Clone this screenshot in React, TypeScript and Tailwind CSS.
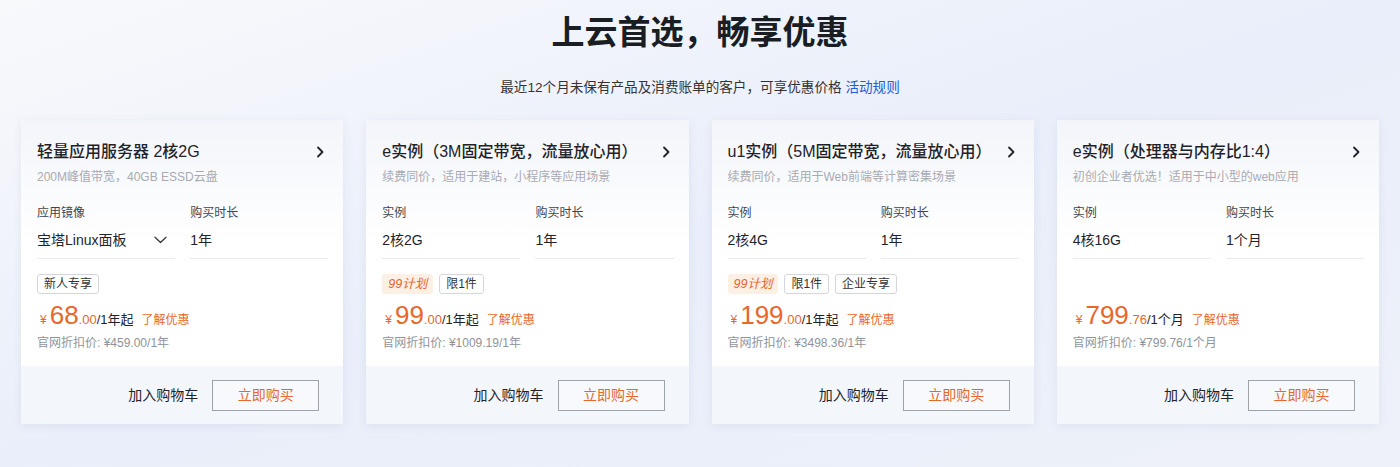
import React from "react";

type Tag = { text: string; kind: "plan" | "plain" };

type Product = {
  title: string;
  desc: string;
  leftLabel: string;
  leftValue: string;
  dropdown?: boolean;
  duration: string;
  tags: Tag[];
  price: string;
  cents: string;
  unit: string;
  original: string;
};

const products: Product[] = [
  {
    title: "轻量应用服务器 2核2G",
    desc: "200M峰值带宽，40GB ESSD云盘",
    leftLabel: "应用镜像",
    leftValue: "宝塔Linux面板",
    dropdown: true,
    duration: "1年",
    tags: [{ text: "新人专享", kind: "plain" }],
    price: "68",
    cents: ".00",
    unit: "/1年起",
    original: "官网折扣价: ¥459.00/1年",
  },
  {
    title: "e实例（3M固定带宽，流量放心用）",
    desc: "续费同价，适用于建站，小程序等应用场景",
    leftLabel: "实例",
    leftValue: "2核2G",
    duration: "1年",
    tags: [
      { text: "99计划", kind: "plan" },
      { text: "限1件", kind: "plain" },
    ],
    price: "99",
    cents: ".00",
    unit: "/1年起",
    original: "官网折扣价: ¥1009.19/1年",
  },
  {
    title: "u1实例（5M固定带宽，流量放心用）",
    desc: "续费同价，适用于Web前端等计算密集场景",
    leftLabel: "实例",
    leftValue: "2核4G",
    duration: "1年",
    tags: [
      { text: "99计划", kind: "plan" },
      { text: "限1件", kind: "plain" },
      { text: "企业专享", kind: "plain" },
    ],
    price: "199",
    cents: ".00",
    unit: "/1年起",
    original: "官网折扣价: ¥3498.36/1年",
  },
  {
    title: "e实例（处理器与内存比1:4）",
    desc: "初创企业者优选！适用于中小型的web应用",
    leftLabel: "实例",
    leftValue: "4核16G",
    duration: "1个月",
    tags: [],
    price: "799",
    cents: ".76",
    unit: "/1个月",
    original: "官网折扣价: ¥799.76/1个月",
  },
];

const ChevronRight = () => (
  <svg width="10" height="12" viewBox="0 0 10 12" fill="none">
    <path d="M3 1.5 L7.5 6 L3 10.5" stroke="#1f2329" strokeWidth="1.8" strokeLinecap="round" strokeLinejoin="round" />
  </svg>
);

const ChevronDown = () => (
  <svg width="13" height="8" viewBox="0 0 13 8" fill="none">
    <path d="M1 1.2 L6.5 6.5 L12 1.2" stroke="#333" strokeWidth="1.2" strokeLinecap="round" strokeLinejoin="round" />
  </svg>
);

function Card({ p }: { p: Product }) {
  return (
    <div className="flex h-[304px] flex-col overflow-hidden rounded-[2px] bg-white shadow-[0_2px_10px_rgba(60,80,120,0.08)]">
      <div className="flex-1 bg-gradient-to-b from-[#f3f5fa] via-white to-white to-[35%] pl-4 pr-[15px] pt-5">
        <div className="flex h-6 items-center justify-between">
          <span className="text-[16px] font-medium leading-6 text-[#1f2329]">{p.title}</span>
          <span className="mr-[3px]">
            <ChevronRight />
          </span>
        </div>
        <div className="mt-1 text-[12px] leading-[18px] text-[#a8abb2]">{p.desc}</div>

        <div className="mt-[17px] grid grid-cols-2 gap-[15px]">
          <div className="border-b border-[#e9ebef] pb-[7px]">
            <div className="text-[12px] leading-5 text-[#41454c]">{p.leftLabel}</div>
            <div className="mt-[6px] flex h-[22px] items-center justify-between pr-2">
              <span className="text-[14px] leading-[22px] text-[#1f2329]">{p.leftValue}</span>
              {p.dropdown && <ChevronDown />}
            </div>
          </div>
          <div className="border-b border-[#e9ebef] pb-[7px]">
            <div className="text-[12px] leading-5 text-[#41454c]">购买时长</div>
            <div className="mt-[6px] h-[22px] text-[14px] leading-[22px] text-[#1f2329]">{p.duration}</div>
          </div>
        </div>

        <div className="mt-[15px] flex h-5 gap-[6px]">
          {p.tags.map((t) =>
            t.kind === "plan" ? (
              <span
                key={t.text}
                className="flex h-5 items-center rounded-[3px] bg-[#fcefe4] px-[6px] text-[12.5px] italic text-[#e5642c]"
              >
                {t.text}
              </span>
            ) : (
              <span
                key={t.text}
                className="flex h-5 items-center rounded-[3px] border border-[#d3d6dc] bg-white px-[6px] text-[12px] text-[#333]"
              >
                {t.text}
              </span>
            )
          )}
        </div>

        <div className="mt-[6px] flex h-[30px] items-baseline pl-[3px]">
          <span className="mr-[3px] text-[12px] text-[#e8672a]">¥</span>
          <span className="text-[26px] font-medium leading-[30px] text-[#e8672a]">{p.price}</span>
          <span className="text-[13px] text-[#e8672a]">{p.cents}</span>
          <span className="text-[13px] text-[#1f2329]">{p.unit}</span>
          <span className="ml-[8px] text-[12px] text-[#e8672a]">了解优惠</span>
        </div>
        <div className="mt-[4px] text-[12px] leading-[18px] text-[#8f939a]">{p.original}</div>
      </div>

      <div className="flex h-[58px] items-center justify-end gap-[14px] bg-[#f3f6fb] pr-6">
        <span className="text-[14px] text-[#1f2329]">加入购物车</span>
        <button className="h-[31px] w-[107px] border border-[#9ea3ab] bg-[#f7f9fc] text-[14px] text-[#e8672a]">
          立即购买
        </button>
      </div>
    </div>
  );
}

export default function App() {
  return (
    <div
      className="h-[467px] w-[1400px] bg-gradient-to-br from-[#f8f9fb] via-[#e9eefa] to-[#eef1f9] pt-[11px]"
      style={{ fontFamily: '"Liberation Sans", "Noto Sans CJK SC", sans-serif' }}
    >
      <h1 className="text-center text-[33px] font-bold leading-[44px] text-[#1a1d22]">上云首选，畅享优惠</h1>
      <p className="mt-[23px] text-center text-[13.6px] leading-5 text-[#333]">
        最近12个月未保有产品及消费账单的客户，可享优惠价格 <span className="text-[#1c5fd6]">活动规则</span>
      </p>
      <div className="mt-[22px] grid grid-cols-4 gap-[23px] px-[21px]">
        {products.map((p) => (
          <Card key={p.title} p={p} />
        ))}
      </div>
    </div>
  );
}
